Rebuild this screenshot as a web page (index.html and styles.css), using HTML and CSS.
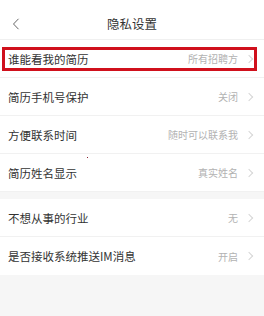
FILE: index.html
```html
<!DOCTYPE html>
<html lang="zh-CN">
<head>
<meta charset="utf-8">
<title>隐私设置</title>
<link rel="stylesheet" href="styles.css">
</head>
<body>
<div class="page">
  <header class="topbar">
    <span class="back">
      <svg width="8" height="12" viewBox="0 0 8 12"><path d="M6.5 0.8 L1.5 6 L6.5 11.2" fill="none" stroke="#666" stroke-width="1"/></svg>
    </span>
    <h1 class="title">隐私设置</h1>
  </header>
  <section class="group">
    <div class="row highlight">
      <span class="label">谁能看我的简历</span>
      <span class="value">所有招聘方<i class="chev"></i></span>
    </div>
    <div class="row">
      <span class="label">简历手机号保护</span>
      <span class="value">关闭<i class="chev"></i></span>
    </div>
    <div class="row">
      <span class="label">方便联系时间</span>
      <span class="value">随时可以联系我<i class="chev"></i></span>
    </div>
    <div class="row">
      <span class="label">简历姓名显示</span>
      <span class="value">真实姓名<i class="chev"></i></span>
      <span class="speck"></span>
    </div>
  </section>
  <div class="band"></div>
  <section class="group">
    <div class="row">
      <span class="label">不想从事的行业</span>
      <span class="value">无<i class="chev"></i></span>
    </div>
    <div class="row last">
      <span class="label">是否接收系统推送IM消息</span>
      <span class="value">开启<i class="chev"></i></span>
    </div>
  </section>
  <div class="rest"></div>
</div>
</body>
</html>
```
FILE: styles.css
```css
html, body {
  margin: 0;
  padding: 0;
  background: #f6f6f6;
}
.page {
  width: 264px;
  height: 316px;
  overflow: hidden;
  display: flex;
  flex-direction: column;
  font-family: "Noto Sans CJK SC", "Noto Sans", sans-serif;
  background: #f6f6f6;
}
.topbar {
  position: relative;
  height: 40px;
  box-sizing: border-box;
  padding-top: 8px;
  background: #fff;
  border-bottom: 1px solid #f0f0f0;
  display: flex;
  align-items: center;
  justify-content: center;
  flex-shrink: 0;
}
.back {
  position: absolute;
  left: 12px;
  top: 18px;
  width: 8px;
  height: 12px;
  display: flex;
}
.title {
  margin: -8px 0 0;
  font-size: 12.5px;
  font-weight: normal;
  color: #333;
  line-height: 32px;
  transform: translateY(4px);
}
.group {
  background: #fff;
  display: flex;
  flex-direction: column;
  flex-shrink: 0;
}
.row {
  position: relative;
  height: 38px;
  box-sizing: border-box;
  border-bottom: 1px solid #f1f1f1;
  display: flex;
  align-items: center;
  justify-content: space-between;
  padding: 0 12px 0 8px;
}
.row.last {
  border-bottom: none;
}
.highlight::after {
  content: "";
  position: absolute;
  left: 2px;
  right: 7px;
  top: 7px;
  height: 24px;
  box-sizing: border-box;
  border: 3px solid #d0101c;
}
.label {
  font-size: 11.5px;
  color: #333;
}
.value {
  display: flex;
  align-items: center;
  font-size: 10px;
  color: #b2b2b2;
}
.chev {
  display: inline-block;
  width: 5px;
  height: 5px;
  margin-left: 8px;
  border-top: 1px solid #d6d6d6;
  border-right: 1px solid #d6d6d6;
  transform: rotate(45deg);
}
.speck {
  position: absolute;
  left: 87px;
  top: 3px;
  width: 1px;
  height: 1px;
  background: #8a2030;
}
.band {
  height: 7px;
  background: #f6f6f6;
  flex-shrink: 0;
}
.rest {
  flex: 1;
  background: #f6f6f6;
}
```
